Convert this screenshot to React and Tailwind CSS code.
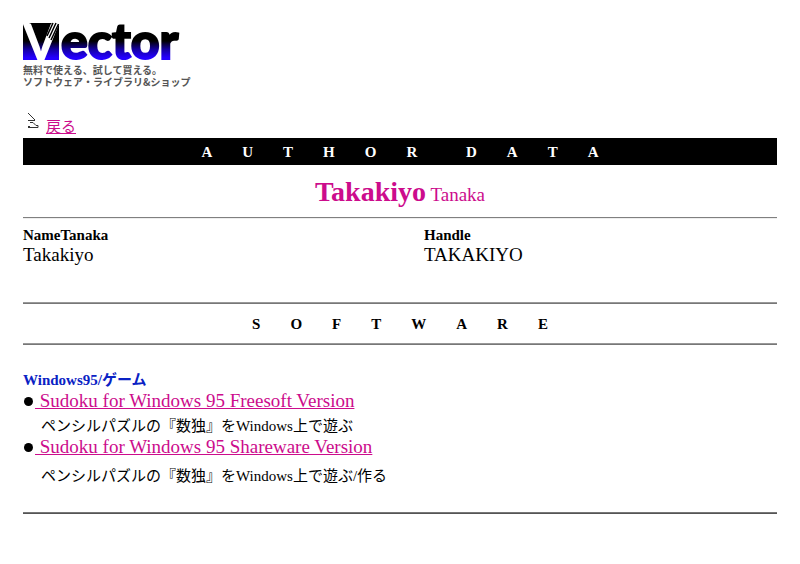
import React from "react";

const authorTitle = "AUTHOR".split("").join("\u00a0".repeat(8)) + "\u00a0".repeat(13) + "DATA".split("").join("\u00a0".repeat(8));
const softwareTitle = "SOFTWARE".split("").join("\u00a0".repeat(8));

const software = [
  {
    title: "Sudoku for Windows 95 Freesoft Version",
    note: "ペンシルパズルの『数独』をWindows上で遊ぶ",
    noteClass: "pt-1",
  },
  {
    title: "Sudoku for Windows 95 Shareware Version",
    note: "ペンシルパズルの『数独』をWindows上で遊ぶ/作る",
    noteClass: "pt-2",
  },
];

function VectorLogo() {
  return (
    <svg width="156" height="40" viewBox="0 0 156 40" role="img" aria-label="Vector" className="block overflow-visible">
      <defs>
        <linearGradient id="ink" gradientUnits="userSpaceOnUse" x1="0" y1="0" x2="0" y2="38">
          <stop offset="0.5" stopColor="#000000" />
          <stop offset="0.72" stopColor="#1400a0" />
          <stop offset="0.94" stopColor="#2400ff" />
        </linearGradient>
      </defs>
      <rect x="0" y="1" width="36" height="37" fill="url(#ink)" />
      <text x="0" y="38" fontSize="51" fontWeight="900" fill="#ffffff" className="font-['Lato',sans-serif]">V</text>
      <path d="M30 1 L24 14 M33 1 L26 16 M35.5 2 L28 18" stroke="#000000" strokeWidth="1.5" />
      <text x="38" y="37" fontSize="50" fontWeight="900" fill="url(#ink)" stroke="url(#ink)" strokeWidth="2" className="font-['Lato',sans-serif]">ector</text>
    </svg>
  );
}

function BackIcon() {
  return (
    <svg width="13" height="18" viewBox="0 0 13 18" fill="none" stroke="#333333" aria-hidden="true" className="shrink-0 self-start">
      <path d="M1 1 L8 8 M1 8.5 H8 M3 10.5 H6 L9 13.5 H11 V15.5 H1 M1 14.5 H3" />
    </svg>
  );
}

function Rule({ className }) {
  return <hr className={"border-t border-b border-x-0 " + className} />;
}

export default function App() {
  return (
    <main className="bg-white px-[23px] pt-[22px] pb-12 text-[15px] leading-5 text-black font-['Liberation_Serif','Noto_Sans_CJK_JP',serif]">
      <header>
        <VectorLogo />
        <p className="text-[10px] leading-3 font-bold text-[#555555] font-['Noto_Sans_CJK_JP',sans-serif] whitespace-nowrap pt-0.5">
          無料で使える、試して買える。
          <br />
          ソフトウェア・ライブラリ&amp;ショップ
        </p>
      </header>

      <nav className="mt-6 flex h-[26px] items-center gap-1.5 pl-1">
        <BackIcon />
        <a href="#back" className="pt-1 text-[#cc0c8c] underline">戻る</a>
      </nav>

      <h1 className="bg-black pt-[5px] pb-[3px] text-center font-bold leading-[19px] text-white">{authorTitle}</h1>

      <h2 className="pt-2.5 pb-[5px] text-center text-[19px] leading-[34px] text-[#cc0c8c]">
        <b className="text-[28px]">Takakiyo</b> Tanaka
      </h2>

      <Rule className="border-t-[#808080] border-b-[#eeeeee]" />

      <dl className="grid grid-cols-[401px_1fr] pt-[7px] pb-[37px]">
        <div>
          <dt className="font-bold leading-[19px]">NameTanaka</dt>
          <dd className="text-[19px] leading-5">Takakiyo</dd>
        </div>
        <div>
          <dt className="font-bold leading-[19px]">Handle</dt>
          <dd className="text-[19px] leading-5">TAKAKIYO</dd>
        </div>
      </dl>

      <Rule className="border-t-[#999999] border-b-[#777777]" />
      <h2 className="pt-[11px] pb-[9px] text-center font-bold leading-[19px]">{softwareTitle}</h2>
      <Rule className="border-t-[#999999] border-b-[#777777]" />

      <section className="pt-[25px] pb-[26px]">
        <h3 className="font-bold leading-5 text-[#0a22c4]">Windows95/ゲーム</h3>
        <ul>
          {software.map((item) => (
            <li key={item.title}>
              <div className="flex items-center text-[19px] leading-[22px]">
                <span className="ml-px mr-0.5 size-[9px] rounded-full bg-black" />
                <a href="#software" className="whitespace-pre text-[#cc0c8c] underline">{" " + item.title}</a>
              </div>
              <p className={"pl-[18px] " + item.noteClass}>{item.note}</p>
            </li>
          ))}
        </ul>
      </section>

      <Rule className="border-t-[#777777] border-b-[#555555]" />
    </main>
  );
}
